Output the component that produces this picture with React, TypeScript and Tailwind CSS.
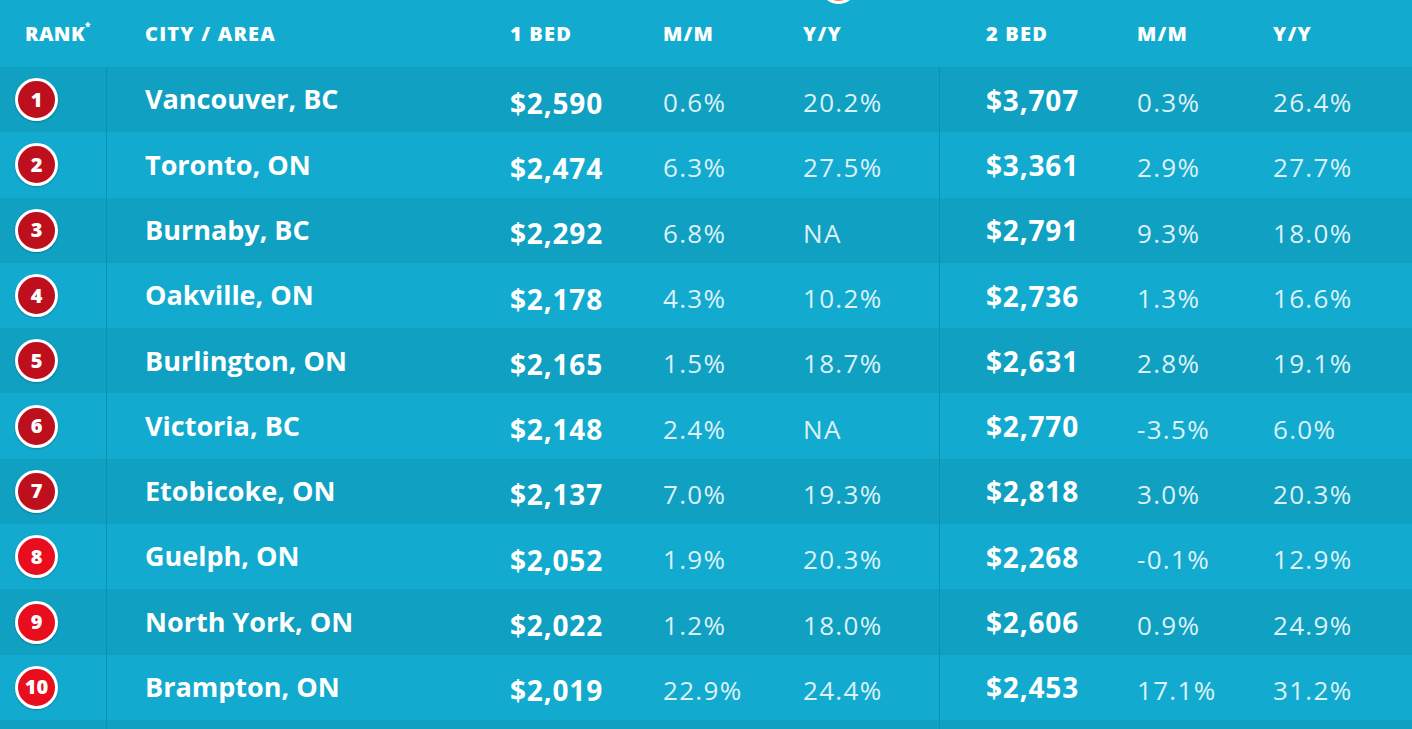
import React from 'react'

type Row = {
  rank: number
  city: string
  one: string
  oneMm: string
  oneYy: string
  two: string
  twoMm: string
  twoYy: string
}

const ROWS: Row[] = [
  { rank: 1, city: 'Vancouver, BC', one: '$2,590', oneMm: '0.6%', oneYy: '20.2%', two: '$3,707', twoMm: '0.3%', twoYy: '26.4%' },
  { rank: 2, city: 'Toronto, ON', one: '$2,474', oneMm: '6.3%', oneYy: '27.5%', two: '$3,361', twoMm: '2.9%', twoYy: '27.7%' },
  { rank: 3, city: 'Burnaby, BC', one: '$2,292', oneMm: '6.8%', oneYy: 'NA', two: '$2,791', twoMm: '9.3%', twoYy: '18.0%' },
  { rank: 4, city: 'Oakville, ON', one: '$2,178', oneMm: '4.3%', oneYy: '10.2%', two: '$2,736', twoMm: '1.3%', twoYy: '16.6%' },
  { rank: 5, city: 'Burlington, ON', one: '$2,165', oneMm: '1.5%', oneYy: '18.7%', two: '$2,631', twoMm: '2.8%', twoYy: '19.1%' },
  { rank: 6, city: 'Victoria, BC', one: '$2,148', oneMm: '2.4%', oneYy: 'NA', two: '$2,770', twoMm: '-3.5%', twoYy: '6.0%' },
  { rank: 7, city: 'Etobicoke, ON', one: '$2,137', oneMm: '7.0%', oneYy: '19.3%', two: '$2,818', twoMm: '3.0%', twoYy: '20.3%' },
  { rank: 8, city: 'Guelph, ON', one: '$2,052', oneMm: '1.9%', oneYy: '20.3%', two: '$2,268', twoMm: '-0.1%', twoYy: '12.9%' },
  { rank: 9, city: 'North York, ON', one: '$2,022', oneMm: '1.2%', oneYy: '18.0%', two: '$2,606', twoMm: '0.9%', twoYy: '24.9%' },
  { rank: 10, city: 'Brampton, ON', one: '$2,019', oneMm: '22.9%', oneYy: '24.4%', two: '$2,453', twoMm: '17.1%', twoYy: '31.2%' },
]

function RankBadge({ n }: { n: number }) {
  // top 7 are a darker red than 8–10
  const bg = n <= 7 ? 'bg-[#bd101c]' : 'bg-[#e80e1e]'
  return (
    <div
      className={`flex h-[43px] w-[43px] items-center justify-center rounded-full border-[3px] border-white ${bg} text-[20px] font-extrabold leading-none text-white shadow-[0_1px_2px_rgba(0,0,0,0.25)]`}
    >
      {n}
    </div>
  )
}

export default function App() {
  return (
    <div
      className="relative h-[729px] w-[1412px] overflow-hidden bg-[#12abcf] text-white"
      style={{ fontFamily: '"Open Sans", Lato, sans-serif' }}
    >
      {/* orange marker peeking from the top */}
      <div className="absolute left-[820px] top-[-33px] h-[37px] w-[37px] rounded-full border-[3px] border-white bg-[#f5893b]" />

      <div className="flex h-[67px] items-center text-[20px] font-extrabold tracking-[0.06em]">
        <div className="w-[107px] pl-[25px] tracking-[0.02em]">
          RANK<span className="align-top text-[10px]">*</span>
        </div>
        <div className="w-[403px] pl-[38px]">CITY / AREA</div>
        <div className="w-[153px]">1 BED</div>
        <div className="w-[140px]">M/M</div>
        <div className="w-[137px]">Y/Y</div>
        <div className="w-[197px] pl-[46px]">2 BED</div>
        <div className="w-[136px]">M/M</div>
        <div className="w-[139px]">Y/Y</div>
      </div>

      {ROWS.map((r, i) => (
        <div
          key={r.rank}
          className={`flex h-[65.3px] items-center ${i % 2 === 0 ? 'bg-[#0fa0c2]' : 'bg-[#12abcf]'}`}
        >
          <div className="flex h-full w-[107px] items-center border-r border-[#0b90b0] pl-[15px]">
            <RankBadge n={r.rank} />
          </div>
          <div className="w-[403px] pl-[38px] text-[27px] font-bold">{r.city}</div>
          <div className="w-[153px] pt-[6px] text-[28px] font-bold tracking-[0.03em]">{r.one}</div>
          <div className="w-[140px] pt-[6px] text-[26px] tracking-[0.05em] text-[#ddf1f7]">{r.oneMm}</div>
          <div className="flex h-full w-[137px] items-center border-r border-[#0b90b0] pt-[6px] text-[26px] tracking-[0.05em] text-[#ddf1f7]">
            {r.oneYy}
          </div>
          <div className="w-[197px] pl-[46px] text-[28px] font-bold tracking-[0.03em]">{r.two}</div>
          <div className="w-[136px] pt-[6px] text-[26px] tracking-[0.05em] text-[#ddf1f7]">{r.twoMm}</div>
          <div className="w-[139px] pt-[6px] text-[26px] tracking-[0.05em] text-[#ddf1f7]">{r.twoYy}</div>
        </div>
      ))}

      <div className="flex h-[65px] bg-[#0fa0c2]">
        <div className="h-full w-[107px] border-r border-[#0b90b0]" />
        <div className="h-full w-[833px] border-r border-[#0b90b0]" />
      </div>
    </div>
  )
}
